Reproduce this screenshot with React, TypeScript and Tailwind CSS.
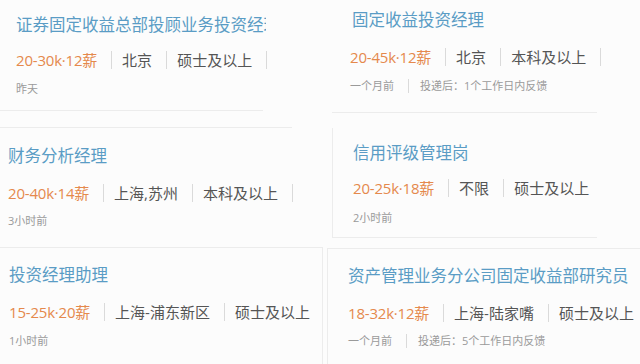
import React from "react";

type Job = {
  title: string;
  salary: string;
  tags: string[];
  tail?: boolean;
  time: string;
  note?: string;
};

const font = { fontFamily: '"Open Sans", "Noto Sans CJK SC", sans-serif' };

function Sep() {
  return <span className="block shrink-0 ml-[14px] mr-[10px] h-[18px] w-px bg-[#dadada]" />;
}

function Meta({ job }: { job: Job }) {
  return (
    <div className="flex items-center h-[20px] whitespace-nowrap text-[15px] leading-5">
      <span className="text-[#e5894c] tracking-[-0.2px]">{job.salary}</span>
      {job.tags.map((t) => (
        <React.Fragment key={t}>
          <Sep />
          <span className="text-[#555555]">{t}</span>
        </React.Fragment>
      ))}
      {job.tail && <Sep />}
    </div>
  );
}

function Time({ job, mt }: { job: Job; mt: string }) {
  return (
    <div className={`flex items-center h-4 text-[11px] leading-4 text-[#9a9a9a] whitespace-nowrap ${mt}`}>
      <span>{job.time}</span>
      {job.note && (
        <>
          <span className="block shrink-0 ml-[14px] mr-[11px] h-[14px] w-px bg-[#dadada]" />
          <span>{job.note}</span>
        </>
      )}
    </div>
  );
}

export default function App() {
  const a: Job = { title: "证券固定收益总部投顾业务投资经理", salary: "20-30k·12薪", tags: ["北京", "硕士及以上"], tail: true, time: "昨天" };
  const b: Job = { title: "财务分析经理", salary: "20-40k·14薪", tags: ["上海,苏州", "本科及以上"], tail: true, time: "3小时前" };
  const c: Job = { title: "投资经理助理", salary: "15-25k·20薪", tags: ["上海-浦东新区", "硕士及以上"], time: "1小时前" };
  const d: Job = { title: "固定收益投资经理", salary: "20-45k·12薪", tags: ["北京", "本科及以上"], tail: true, time: "一个月前", note: "投递后：1个工作日内反馈" };
  const e: Job = { title: "信用评级管理岗", salary: "20-25k·18薪", tags: ["不限", "硕士及以上"], time: "2小时前" };
  const f: Job = { title: "资产管理业务分公司固定收益部研究员", salary: "18-32k·12薪", tags: ["上海-陆家嘴", "硕士及以上"], time: "一个月前", note: "投递后：5个工作日内反馈" };

  return (
    <div className="w-[640px] h-[364px] overflow-hidden bg-[#fcfcfc] flex" style={font}>
      {/* left column */}
      <div className="w-[327px] flex flex-col">
        <div className="w-[263px] h-[111px] border-b border-[#ececec] pl-4 pt-[13px]">
          <div className="w-[250px] overflow-hidden whitespace-nowrap text-[16.5px] leading-6 text-[#5a9cc5]">{a.title}</div>
          <div className="mt-[13px]"><Meta job={a} /></div>
          <Time job={a} mt="mt-[11px]" />
        </div>
        <div className="mt-4 w-[292px] h-[120px] border-t border-[#ececec] pl-2 pt-4">
          <div className="text-[16.5px] leading-6 text-[#5a9cc5] whitespace-nowrap">{b.title}</div>
          <div className="mt-[15px]"><Meta job={b} /></div>
          <Time job={b} mt="mt-[10px]" />
        </div>
        <div className="flex-1 w-[323px] border-t border-r border-[#ececec] pl-[9px] pt-[15px]">
          <div className="text-[16.5px] leading-6 text-[#5a9cc5] whitespace-nowrap">{c.title}</div>
          <div className="mt-[15px]"><Meta job={c} /></div>
          <Time job={c} mt="mt-[11px]" />
        </div>
      </div>
      {/* right column */}
      <div className="flex-1 flex flex-col">
        <div className="ml-[5px] w-[265px] h-[113px] border-b border-[#ececec] pl-[18px] pt-2">
          <div className="pl-[2px] text-[16.5px] leading-6 text-[#5a9cc5] whitespace-nowrap">{d.title}</div>
          <div className="mt-[15px]"><Meta job={d} /></div>
          <Time job={d} mt="mt-[11px]" />
        </div>
        <div className="mt-[15px] ml-[5px] w-[265px] h-[110px] border-l border-b border-[#ececec] pl-5 pt-[13px]">
          <div className="text-[16.5px] leading-6 text-[#5a9cc5] whitespace-nowrap">{e.title}</div>
          <div className="mt-[13px]"><Meta job={e} /></div>
          <Time job={e} mt="mt-[12px]" />
        </div>
        <div className="mt-[10px] flex-1 border-l border-t border-[#ececec] pl-5 pt-[15px]">
          <div className="text-[16.5px] leading-6 text-[#5a9cc5] whitespace-nowrap">{f.title}</div>
          <div className="mt-[15px]"><Meta job={f} /></div>
          <Time job={f} mt="mt-[10px]" />
        </div>
      </div>
    </div>
  );
}
